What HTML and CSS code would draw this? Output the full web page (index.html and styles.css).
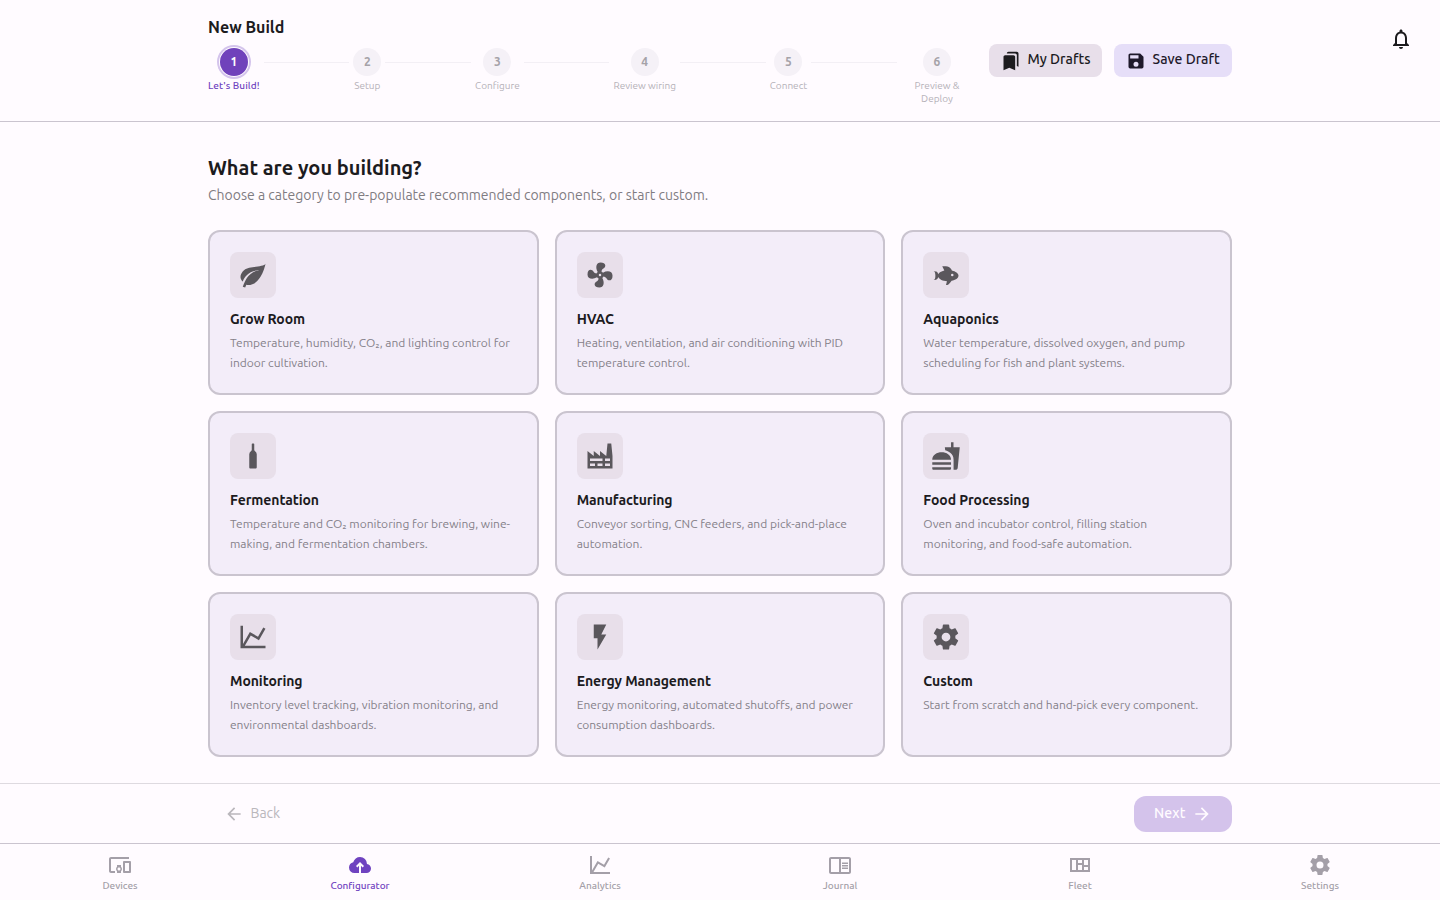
FILE: index.html
```html
<!DOCTYPE html>
<html lang="en">
<head>
    <meta charset="UTF-8">
    <meta name="viewport" content="width=device-width, initial-scale=1.0">
    <title>New Build</title>
    <link rel="stylesheet" href="styles.css">
</head>
<body>
    <header class="header">
        <div class="container header-row">
            <div class="header-main">
                <h1 class="page-title">New Build</h1>
                <div class="stepper">
                    <div class="step active"><span class="dot">1</span><span class="label">Let's Build!</span></div>
                    <div class="line"></div>
                    <div class="step"><span class="dot">2</span><span class="label">Setup</span></div>
                    <div class="line"></div>
                    <div class="step"><span class="dot">3</span><span class="label">Configure</span></div>
                    <div class="line"></div>
                    <div class="step"><span class="dot">4</span><span class="label">Review wiring</span></div>
                    <div class="line"></div>
                    <div class="step"><span class="dot">5</span><span class="label">Connect</span></div>
                    <div class="line"></div>
                    <div class="step step-deploy"><span class="dot">6</span><span class="label">Preview &amp;<br>Deploy</span></div>
                </div>
            </div>
            <div class="header-actions">
                <button class="btn btn-drafts">
                    <svg viewBox="0 0 24 24"><path d="M19 18l2 1V3c0-1.1-.9-2-2-2H8.99C7.89 1 7 1.9 7 3h10c1.1 0 2 .9 2 2v13zM15 5H5c-1.1 0-2 .9-2 2v16l7-3 7 3V7c0-1.1-.9-2-2-2z"/></svg>
                    <span>My Drafts</span>
                </button>
                <button class="btn btn-save">
                    <svg viewBox="0 0 24 24"><path d="M15,9H5V5H15M12,19A3,3 0 0,1 9,16A3,3 0 0,1 12,13A3,3 0 0,1 15,16A3,3 0 0,1 12,19M17,3H5C3.89,3 3,3.9 3,5V19A2,2 0 0,0 5,21H19A2,2 0 0,0 21,19V7L17,3Z"/></svg>
                    <span>Save Draft</span>
                </button>
            </div>
        </div>
        <button class="bell" aria-label="Notifications">
            <svg viewBox="0 0 24 24"><path d="M12 22c1.1 0 2-.9 2-2h-4c0 1.1.9 2 2 2zm6-6v-5c0-3.07-1.63-5.64-4.5-6.32V4c0-.83-.67-1.5-1.5-1.5s-1.5.67-1.5 1.5v.68C7.64 5.36 6 7.92 6 11v5l-2 2v1h16v-1l-2-2zm-2 1H8v-6c0-2.48 1.51-4.5 4-4.5s4 2.02 4 4.5v6z"/></svg>
        </button>
    </header>

    <main class="container content">
        <h2 class="heading">What are you building?</h2>
        <p class="subheading">Choose a category to pre-populate recommended components, or start custom.</p>

        <div class="grid">
            <div class="card">
                <div class="card-icon"><svg viewBox="0 0 24 24"><path d="M17,8C8,10 5.9,16.17 3.82,21.34L5.71,22L6.66,19.7C7.14,19.87 7.64,20 8,20C19,20 22,3 22,3C21,5 14,5.25 9,6.25C4,7.25 2,11.5 2,13.5C2,15.5 3.75,17.25 3.75,17.25C7,8 17,8 17,8Z"/></svg></div>
                <h3>Grow Room</h3>
                <p>Temperature, humidity, CO₂, and lighting control for<br>indoor cultivation.</p>
            </div>
            <div class="card">
                <div class="card-icon"><svg viewBox="0 0 24 24"><path d="M12,11A1,1 0 0,0 11,12A1,1 0 0,0 12,13A1,1 0 0,0 13,12A1,1 0 0,0 12,11M12.5,2C17,2 17.11,5.57 14.75,6.75C13.76,7.24 13.32,8.29 13.13,9.22C13.61,9.42 14.03,9.73 14.35,10.13C18.05,8.13 22.03,8.92 22.03,12.5C22.03,17 18.46,17.1 17.28,14.73C16.78,13.74 15.72,13.3 14.79,13.11C14.59,13.59 14.28,14 13.88,14.34C15.87,18.03 15.08,22 11.5,22C7,22 6.91,18.42 9.27,17.24C10.25,16.75 10.69,15.71 10.89,14.79C10.4,14.59 9.97,14.27 9.65,13.87C5.96,15.85 2,15.07 2,11.5C2,7 5.56,6.89 6.74,9.26C7.24,10.25 8.29,10.68 9.22,10.87C9.41,10.39 9.73,9.97 10.14,9.65C8.15,5.96 8.94,2 12.5,2Z"/></svg></div>
                <h3>HVAC</h3>
                <p>Heating, ventilation, and air conditioning with PID<br>temperature control.</p>
            </div>
            <div class="card">
                <div class="card-icon"><svg viewBox="0 0 24 24"><path d="M12,20L12.76,17C9.5,16.79 6.59,15.4 5.75,13.58C5.66,14.06 5.53,14.5 5.33,14.83C4.67,16 3.33,16 2,16C3.1,16 3.5,14.43 3.5,12.5C3.5,10.57 3.1,9 2,9C3.33,9 4.67,9 5.33,10.17C5.53,10.5 5.66,10.94 5.75,11.42C6.4,10 8.32,8.85 10.66,8.32L9,5C11,5 13,5 14.33,5.67C15.46,6.23 16.11,7.27 16.69,8.38C19.61,9.08 22,10.66 22,12.5C22,14.38 19.5,16 16.5,16.66C15.67,17.76 14.86,18.78 14.17,19.33C13.33,20 12.67,20 12,20M17,11A1,1 0 0,0 16,12A1,1 0 0,0 17,13A1,1 0 0,0 18,12A1,1 0 0,0 17,11Z"/></svg></div>
                <h3>Aquaponics</h3>
                <p>Water temperature, dissolved oxygen, and pump<br>scheduling for fish and plant systems.</p>
            </div>
            <div class="card">
                <div class="card-icon"><svg viewBox="0 0 24 24"><path d="M11 2.500q0-.5.500-.5h1q.5 0 .5.500V7q0 .6.500.900Q15 8.800 15 10.500V21c0 .6-.4 1-1 1h-4c-.6 0-1-.4-1-1V10.500Q9 8.800 10.500 7.900 11 7.600 11 7z"/></svg></div>
                <h3>Fermentation</h3>
                <p>Temperature and CO₂ monitoring for brewing, wine-<br>making, and fermentation chambers.</p>
            </div>
            <div class="card">
                <div class="card-icon"><svg viewBox="0 0 24 24"><path d="M4,18V20H8V18H4M4,14V16H14V14H4M10,18V20H14V18H10M16,14V16H20V14H16M16,18V20H20V18H16M2,22V8L7,12V8L12,12V8L17,12L18,2H21L22,12V22H2Z"/></svg></div>
                <h3>Manufacturing</h3>
                <p>Conveyor sorting, CNC feeders, and pick-and-place<br>automation.</p>
            </div>
            <div class="card">
                <div class="card-icon"><svg viewBox="0 0 24 24"><path d="M18.060 22.990h1.660c.84 0 1.530-.64 1.630-1.460L23 5.050h-5V1h-1.970v4.050h-4.970l.3 2.340c1.710.47 3.310 1.320 4.270 2.260 1.440 1.420 2.430 2.890 2.430 5.290v8.050zM1 21.990V21h15.030v.99c0 .55-.45 1-1.010 1H2.010c-.56 0-1.010-.45-1.010-1zm15.030-7c0-8-15.030-8-15.030 0h15.030zM1.020 17h15v2h-15z"/></svg></div>
                <h3>Food Processing</h3>
                <p>Oven and incubator control, filling station<br>monitoring, and food-safe automation.</p>
            </div>
            <div class="card">
                <div class="card-icon"><svg viewBox="0 0 24 24"><path d="M16,11.78L20.24,4.45L21.97,5.45L16.74,14.5L10.23,10.75L5.46,19H22V21H2V3H4V17.54L9.5,8L16,11.78Z"/></svg></div>
                <h3>Monitoring</h3>
                <p>Inventory level tracking, vibration monitoring, and<br>environmental dashboards.</p>
            </div>
            <div class="card">
                <div class="card-icon"><svg viewBox="0 0 24 24"><path d="M7,2V13H10V22L17,10H13L17,2H7Z"/></svg></div>
                <h3>Energy Management</h3>
                <p>Energy monitoring, automated shutoffs, and power<br>consumption dashboards.</p>
            </div>
            <div class="card">
                <div class="card-icon"><svg viewBox="0 0 24 24"><path d="M12,15.5A3.5,3.5 0 0,1 8.5,12A3.5,3.5 0 0,1 12,8.5A3.5,3.5 0 0,1 15.5,12A3.5,3.5 0 0,1 12,15.5M19.43,12.97C19.47,12.65 19.5,12.33 19.5,12C19.5,11.67 19.47,11.34 19.43,11L21.54,9.37C21.73,9.22 21.78,8.95 21.66,8.73L19.66,5.27C19.54,5.05 19.27,4.96 19.05,5.05L16.56,6.05C16.04,5.66 15.5,5.32 14.87,5.07L14.5,2.42C14.46,2.18 14.25,2 14,2H10C9.75,2 9.54,2.18 9.5,2.42L9.13,5.07C8.5,5.32 7.96,5.66 7.44,6.05L4.95,5.05C4.73,4.96 4.46,5.05 4.34,5.27L2.34,8.73C2.21,8.95 2.27,9.22 2.46,9.37L4.57,11C4.53,11.34 4.5,11.67 4.5,12C4.5,12.33 4.53,12.65 4.57,12.97L2.46,14.63C2.27,14.78 2.21,15.05 2.34,15.27L4.34,18.73C4.46,18.95 4.73,19.03 4.95,18.95L7.44,17.94C7.96,18.34 8.5,18.68 9.13,18.93L9.5,21.58C9.54,21.82 9.75,22 10,22H14C14.25,22 14.46,21.82 14.5,21.58L14.87,18.93C15.5,18.67 16.04,18.34 16.56,17.94L19.05,18.95C19.27,19.03 19.54,18.95 19.66,18.73L21.66,15.27C21.78,15.05 21.73,14.78 21.54,14.63L19.43,12.97Z"/></svg></div>
                <h3>Custom</h3>
                <p>Start from scratch and hand-pick every component.</p>
            </div>
        </div>
    </main>

    <div class="actions">
        <div class="container actions-row">
            <button class="btn-back" disabled>
                <svg viewBox="0 0 24 24"><path d="M20 11H7.830l5.590-5.590L12 4l-8 8 8 8 1.410-1.410L7.830 13H20v-2z"/></svg>
                <span>Back</span>
            </button>
            <button class="btn-next" disabled>
                <span>Next</span>
                <svg viewBox="0 0 24 24"><path d="M12 4l-1.410 1.410L16.170 11H4v2h12.170l-5.580 5.590L12 20l8-8z"/></svg>
            </button>
        </div>
    </div>

    <nav class="tabs">
        <a class="tab" href="#">
            <svg viewBox="0 0 24 24"><path d="M3 6h18V4H3c-1.100 0-2 .9-2 2v12c0 1.100.9 2 2 2h4v-2H3V6zm10 6H9v1.780c-.61.55-1 1.330-1 2.220s.39 1.670 1 2.220V20h4v-1.780c.61-.55 1-1.340 1-2.220s-.39-1.670-1-2.220V12zm-2 5.500c-.83 0-1.500-.67-1.500-1.500s.67-1.500 1.500-1.500 1.500.67 1.500 1.500-.67 1.500-1.500 1.500zM22 8h-6c-.5 0-1 .5-1 1v10c0 .5.5 1 1 1h6c.5 0 1-.5 1-1V9c0-.5-.5-1-1-1zm-1 10h-4v-8h4v8z"/></svg>
            <span>Devices</span>
        </a>
        <a class="tab current" href="#">
            <svg viewBox="0 0 24 24"><path d="M11 20H6.500q-2.280 0-3.890-1.570Q1 16.850 1 14.580q0-1.950 1.170-3.480 1.180-1.530 3.080-1.950.63-2.300 2.500-3.720Q9.630 4 12 4q2.930 0 4.960 2.040Q19 8.070 19 11q1.730.2 2.860 1.500 1.140 1.280 1.140 3 0 1.880-1.310 3.190T18.500 20H13v-7.150l1.600 1.550L16 13l-4-4-4 4 1.400 1.400 1.600-1.550Z"/></svg>
            <span>Configurator</span>
        </a>
        <a class="tab" href="#">
            <svg viewBox="0 0 24 24"><path d="M16,11.78L20.24,4.45L21.97,5.45L16.74,14.5L10.23,10.75L5.46,19H22V21H2V3H4V17.54L9.5,8L16,11.78Z"/></svg>
            <span>Analytics</span>
        </a>
        <a class="tab" href="#">
            <svg viewBox="0 0 24 24"><path d="M21 4H3c-1.100 0-2 .9-2 2v13c0 1.100.9 2 2 2h18c1.100 0 2-.9 2-2V6c0-1.100-.9-2-2-2zM3 19V6h8v13H3zm18 0h-8V6h8v13zm-7-9.500h6V11h-6zm0 2.500h6v1.500h-6zm0 2.500h6V16h-6z"/></svg>
            <span>Journal</span>
        </a>
        <a class="tab" href="#">
            <svg viewBox="0 0 24 24"><path fill-rule="evenodd" d="M2 5h20v14H2zM4 7h4v10H4zM10 7h4v3h-4zM10 12h4v5h-4zM16 7h4v5h-4zM16 14h4v3h-4z"/></svg>
            <span>Fleet</span>
        </a>
        <a class="tab" href="#">
            <svg viewBox="0 0 24 24"><path d="M12,15.5A3.5,3.5 0 0,1 8.5,12A3.5,3.5 0 0,1 12,8.5A3.5,3.5 0 0,1 15.5,12A3.5,3.5 0 0,1 12,15.5M19.43,12.97C19.47,12.65 19.5,12.33 19.5,12C19.5,11.67 19.47,11.34 19.43,11L21.54,9.37C21.73,9.22 21.78,8.95 21.66,8.73L19.66,5.27C19.54,5.05 19.27,4.96 19.05,5.05L16.56,6.05C16.04,5.66 15.5,5.32 14.87,5.07L14.5,2.42C14.46,2.18 14.25,2 14,2H10C9.75,2 9.54,2.18 9.5,2.42L9.13,5.07C8.5,5.32 7.96,5.66 7.44,6.05L4.95,5.05C4.73,4.96 4.46,5.05 4.34,5.27L2.34,8.73C2.21,8.95 2.27,9.22 2.46,9.37L4.57,11C4.53,11.34 4.5,11.67 4.5,12C4.5,12.33 4.53,12.65 4.57,12.97L2.46,14.63C2.27,14.78 2.21,15.05 2.34,15.27L4.34,18.73C4.46,18.95 4.73,19.03 4.95,18.95L7.44,17.94C7.96,18.34 8.5,18.68 9.13,18.93L9.5,21.58C9.54,21.82 9.75,22 10,22H14C14.25,22 14.46,21.82 14.5,21.58L14.87,18.93C15.5,18.67 16.04,18.34 16.56,17.94L19.05,18.95C19.27,19.03 19.54,18.95 19.66,18.73L21.66,15.27C21.78,15.05 21.73,14.78 21.54,14.63L19.43,12.97Z"/></svg>
            <span>Settings</span>
        </a>
    </nav>
</body>
</html>
```
FILE: styles.css
```css
* {
    box-sizing: border-box;
}

body {
    margin: 0;
    height: 100vh;
    display: flex;
    flex-direction: column;
    overflow: hidden;
    font-family: Ubuntu, "Noto Sans", sans-serif;
    background-color: #fffbff;
    color: #1c1b1e;
}

h1, h2, h3, p {
    margin: 0;
}

button {
    border: none;
    background: none;
    padding: 0;
    font-family: inherit;
    color: inherit;
}

svg {
    fill: currentColor;
    display: block;
    flex-shrink: 0;
}

.container {
    width: 1024px;
    margin: 0 auto;
}

/* header */
.header {
    position: relative;
    height: 122px;
    padding-top: 16px;
    border-bottom: 1px solid #cac4cf;
    flex-shrink: 0;
}

.header-row {
    display: flex;
    align-items: center;
    gap: 16px;
}

.header-main {
    flex: 1;
}

.page-title {
    font-size: 16px;
    line-height: 22px;
    font-weight: 600;
    margin-bottom: 10px;
}

.stepper {
    display: flex;
    align-items: flex-start;
}

.step {
    display: flex;
    flex-direction: column;
    align-items: center;
    gap: 3px;
    color: #b5b1b8;
}

.step-deploy {
    width: 72px;
}

.dot {
    width: 28px;
    height: 28px;
    border-radius: 50%;
    background-color: #f5f1f7;
    color: #a5a2a8;
    font-size: 12px;
    line-height: 28px;
    font-weight: 600;
    text-align: center;
}

.label {
    font-size: 10px;
    line-height: 13px;
    text-align: center;
    white-space: nowrap;
}

.active {
    color: #6f43c0;
}

.active .dot {
    background-color: #7042bb;
    color: #fff;
    box-shadow: 0 0 0 1px #fffbff, 0 0 0 3px #d4c4ec;
}

.active .label {
    font-weight: 500;
    letter-spacing: 0.08px;
}

.line {
    flex: 1;
    height: 1px;
    margin: 14px 4px 0;
    background-color: #f3eff5;
}

.header-actions {
    display: flex;
    gap: 12px;
}

.btn {
    display: flex;
    align-items: center;
    gap: 6.5px;
    height: 33px;
    padding-left: 12px;
    border-radius: 8px;
    font-size: 14px;
    font-weight: 500;
    white-space: nowrap;
}

.btn svg {
    width: 20px;
    height: 20px;
}

.btn span {
    padding-bottom: 4px;
}

.btn-drafts {
    width: 113px;
    background-color: #e8dfea;
}

.btn-save {
    width: 118px;
    background-color: #e6def8;
    color: #1e192b;
}

.bell {
    position: absolute;
    top: 27px;
    right: 27px;
}

.bell svg {
    width: 24px;
    height: 24px;
}

/* category picker */
.content {
    flex: 1;
    padding-top: 34px;
}

.heading {
    font-size: 20px;
    line-height: 24px;
    font-weight: 600;
}

.subheading {
    font-size: 14px;
    line-height: 20px;
    margin: 5px 0 25px;
    color: #7f7c82;
    white-space: nowrap;
}

.grid {
    display: grid;
    grid-template-columns: repeat(3, 1fr);
    gap: 16px;
}

.card {
    height: 165px;
    padding: 20px;
    border: 2px solid #cac4cf;
    border-radius: 12px;
    background-color: #f3edf9;
}

.card-icon {
    width: 46px;
    height: 46px;
    padding: 8px;
    border-radius: 8px;
    background-color: #e8dfea;
    color: #5a575c;
}

.card h3 {
    margin: 10px 0 3px;
    font-size: 14px;
    line-height: 22px;
    font-weight: 600;
    letter-spacing: -0.08px;
}

.card p {
    font-size: 12px;
    line-height: 20px;
    color: #858189;
    white-space: nowrap;
}

/* back / next */
.actions {
    height: 60px;
    border-top: 1px solid #dedae0;
    flex-shrink: 0;
}

.actions-row {
    display: flex;
    justify-content: space-between;
    align-items: center;
    padding-top: 12px;
}

.actions svg {
    width: 20px;
    height: 20px;
}

.btn-back,
.btn-next {
    display: flex;
    align-items: center;
    height: 36px;
    font-size: 14px;
}

.btn-back span,
.btn-next span {
    padding-bottom: 2px;
}

.btn-back {
    gap: 6.5px;
    padding-left: 16px;
    color: #bab7bc;
}

.btn-next {
    justify-content: space-between;
    width: 98px;
    padding: 0 20px;
    border-radius: 12px;
    background-color: #d4c3eb;
    color: #fffbff;
    font-weight: 500;
    letter-spacing: 0.1px;
}

/* bottom tabs */
.tabs {
    display: grid;
    grid-template-columns: repeat(6, 1fr);
    height: 57px;
    border-top: 1px solid #cac4cf;
    flex-shrink: 0;
}

.tab {
    display: flex;
    flex-direction: column;
    align-items: center;
    padding-top: 9px;
    font-size: 10px;
    line-height: 14px;
    font-weight: 500;
    color: #a49fa8;
    text-decoration: none;
}

.tab svg {
    width: 24px;
    height: 24px;
    margin-bottom: 2px;
}

.current {
    color: #6f43c0;
}
```
